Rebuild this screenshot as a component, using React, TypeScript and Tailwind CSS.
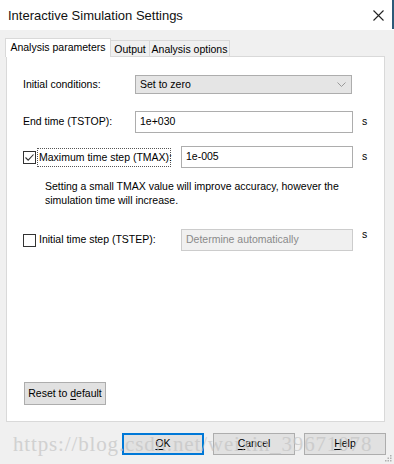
import React from "react";

const font = { fontFamily: '"Liberation Sans", Arial, sans-serif' };

const Check = ({ checked }: { checked: boolean }) => (
  <span className="flex h-[13px] w-[13px] shrink-0 items-center justify-center border border-[#333] bg-white">
    {checked && (
      <svg width="11" height="11" viewBox="0 0 11 11">
        <polyline points="1.5,5.5 4.2,8.2 9.5,2.5" fill="none" stroke="#333" strokeWidth="1.1" />
      </svg>
    )}
  </span>
);

const Btn = ({ under, rest, focus }: { under: string; rest: string; focus?: boolean }) => (
  <button
    className={
      "flex h-[22px] w-[82px] items-center justify-center bg-[#e1e1e1] text-[10.5px] text-black " +
      (focus ? "border-[2px] border-[#0078d7]" : "border border-[#adadad]")
    }
  >
    <span className="underline underline-offset-2">{under}</span>
    {rest}
  </button>
);

export default function App() {
  return (
    <div className="relative h-[464px] w-[394px] overflow-hidden bg-[#f0f0f0] text-[10.5px] text-black" style={font}>
      {/* title bar */}
      <div className="flex h-[30px] items-center justify-between bg-white pl-[8px] pr-[10px]">
        <span className="text-[13px] leading-none text-[#111]">Interactive Simulation Settings</span>
        <svg width="11" height="11" viewBox="0 0 11 11">
          <path d="M0.5 0.5 L10.5 10.5 M10.5 0.5 L0.5 10.5" stroke="#222" strokeWidth="1.1" />
        </svg>
      </div>
      <div className="absolute right-0 top-0 h-[29px] w-[2px] bg-[#2c5a78]" />

      {/* tabs */}
      <div className="ml-[5px] mt-[8px] flex h-[19px] items-end whitespace-nowrap">
        <div className="relative z-10 flex h-[19px] w-[106px] items-start justify-center border border-b-0 border-[#d9d9d9] bg-white pt-[2px] leading-[12px]">
          Analysis parameters
        </div>
        <div className="flex h-[17px] w-[39px] items-start justify-center border border-b-0 border-l-0 border-[#d9d9d9] pt-[2px] leading-[12px]">
          Output
        </div>
        <div className="flex h-[17px] w-[80px] items-start justify-center border border-b-0 border-l-0 border-[#d9d9d9] pt-[2px] leading-[12px]">
          Analysis options
        </div>
      </div>

      {/* panel */}
      <div className="-mt-px ml-[6px] flex h-[366px] w-[379px] flex-col border border-[#d9d9d9] bg-white pl-[16px]">
        <div className="mt-[18px] flex h-[19px] items-center">
          <span className="w-[112px]">Initial conditions:</span>
          <div className="flex h-[19px] w-[217px] items-center justify-between border border-[#adadad] bg-[#e5e5e5] pl-[4px] pr-[5px]">
            <span>Set to zero</span>
            <svg width="9" height="6" viewBox="0 0 9 6">
              <polyline points="0.5,0.5 4.5,4.5 8.5,0.5" fill="none" stroke="#999" strokeWidth="1" />
            </svg>
          </div>
        </div>

        <div className="mt-[17px] flex h-[22px] items-center">
          <span className="w-[112px]">End time (TSTOP):</span>
          <div className="flex h-[22px] w-[218px] items-center border border-[#adadad] bg-white pl-[4px]">1e+030</div>
          <span className="ml-[9px]">s</span>
        </div>

        <div className="mt-[13px] flex h-[22px] items-center">
          <Check checked />
          <span className="ml-px w-[134px] whitespace-nowrap border border-dotted border-[#555] pl-px leading-[17px]">
            Maximum time step (TMAX):
          </span>
          <div className="ml-[10px] flex h-[22px] w-[172px] items-center border border-[#adadad] bg-white pl-[4px]">1e-005</div>
          <span className="ml-[9px]">s</span>
        </div>

        <p className="ml-[22px] mt-[11px] w-[300px] leading-[14px]">
          Setting a small TMAX value will improve accuracy, however the simulation time will increase.
        </p>

        <div className="mt-[22px] flex h-[22px] items-center">
          <Check checked={false} />
          <span className="ml-[3px] w-[142px]">Initial time step (TSTEP):</span>
          <div className="flex h-[22px] w-[172px] items-center border border-[#cccccc] bg-[#f0f0f0] pl-[4px] text-[#8a8a8a]">
            Determine automatically
          </div>
          <span className="-mt-[10px] ml-[9px]">s</span>
        </div>

        <button className="ml-px mt-[131px] flex h-[23px] w-[82px] items-center justify-center whitespace-nowrap border border-[#adadad] bg-[#e1e1e1]">
          Reset to&nbsp;<span className="underline underline-offset-2">d</span>efault
        </button>
      </div>

      {/* bottom buttons */}
      <div className="mr-[8px] mt-[11px] flex justify-end gap-[9px]">
        <Btn under="O" rest="K" focus />
        <Btn under="C" rest="ancel" />
        <Btn under="H" rest="elp" />
      </div>

      {/* resize grip */}
      <svg width="7" height="7" viewBox="0 0 7 7" className="absolute bottom-[2px] right-[2px]">
        <rect x="5" y="0" width="1.5" height="1.5" fill="#b0b0b0" />
        <rect x="2.5" y="2.5" width="1.5" height="1.5" fill="#b0b0b0" />
        <rect x="5" y="2.5" width="1.5" height="1.5" fill="#b0b0b0" />
        <rect x="0" y="5" width="1.5" height="1.5" fill="#b0b0b0" />
        <rect x="2.5" y="5" width="1.5" height="1.5" fill="#b0b0b0" />
        <rect x="5" y="5" width="1.5" height="1.5" fill="#b0b0b0" />
      </svg>

      {/* watermark */}
      <div
        className="pointer-events-none absolute left-[13px] top-[434px] whitespace-nowrap text-[21px] leading-[21px] tracking-[0.85px] text-[#c4c4c4] opacity-70"
        style={{ fontFamily: '"Liberation Serif", serif' }}
      >
        https://blog.csdn.net/weixin_39671078
      </div>
    </div>
  );
}
